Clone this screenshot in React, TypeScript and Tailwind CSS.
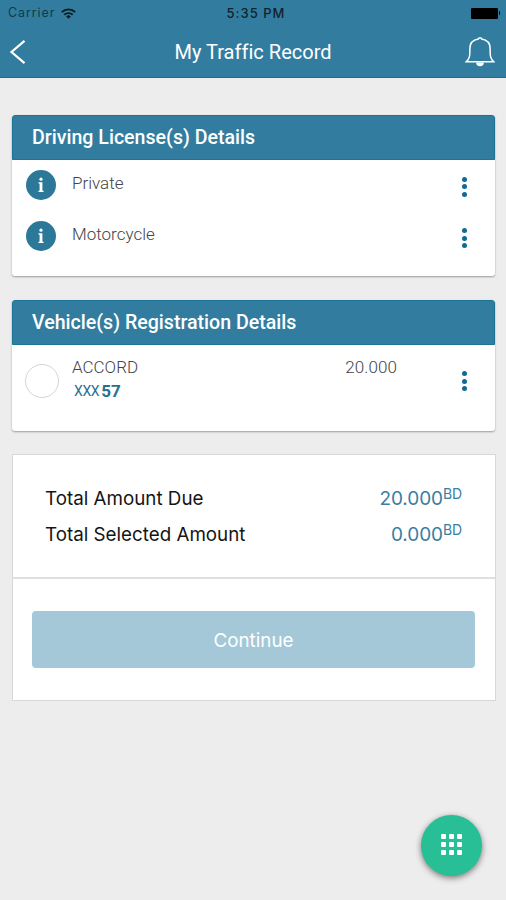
import React from "react";

const roboto = "font-['Roboto','Noto_Sans',sans-serif]";
const inter = "font-['Inter','Liberation_Sans',sans-serif]";

function Dots() {
  return (
    <div className="flex w-[5px] flex-col gap-[2.5px]">
      <span className="size-[5px] rounded-full bg-[#126a92]" />
      <span className="size-[5px] rounded-full bg-[#126a92]" />
      <span className="size-[5px] rounded-full bg-[#126a92]" />
    </div>
  );
}

function InfoIcon() {
  return (
    <svg className="size-[30px] shrink-0" viewBox="0 0 30 30">
      <circle cx="15" cy="15" r="15" fill="#2b7899" />
      <circle cx="15" cy="9.2" r="1.6" fill="#fff" />
      <path d="M12.4 12.3h4v8.3l1.2.5v1h-5.2v-1l1.2-.5v-6.8l-1.2-.5z" fill="#fff" />
    </svg>
  );
}

function StatusBar() {
  return (
    <div className={`grid h-[26px] grid-cols-3 items-center pr-[6px] pl-2 text-[12px] text-[#10222b] ${inter}`}>
      <div className="flex items-center gap-[6px]">
        <span className="pt-px text-[12.5px] tracking-[0.9px] text-[#123848]">Carrier</span>
        <svg className="h-[11px] w-[15px]" viewBox="0 0 15 11" fill="none" stroke="#0b1c24" strokeWidth="1.9">
          <path d="M.8 4.2a9.4 9.4 0 0 1 13.4 0M3.3 6.8a6 6 0 0 1 8.4 0" />
          <path d="M7.5 10.8 5.2 8.5a3.2 3.2 0 0 1 4.6 0z" fill="#0b1c24" stroke="none" />
        </svg>
      </div>
      <span className="pt-0.5 pl-[4px] text-center text-[13px] font-medium tracking-[1px] whitespace-nowrap">5:35 PM</span>
      <div className="flex items-center justify-end gap-px">
        <span className="h-[11px] w-[27px] rounded-[1px] bg-black" />
        <span className="h-1 w-[1.5px] rounded-r bg-black" />
      </div>
    </div>
  );
}

function SectionHeader({ title }: { title: string }) {
  return (
    <h2 className="flex h-[45px] items-center rounded-t-[3px] border border-[#1d7596] bg-[#327d9f] pl-[19px] text-[19.6px] font-medium text-white">
      {title}
    </h2>
  );
}

function LicenseRow({ name }: { name: string }) {
  return (
    <li className="flex h-[51.5px] items-center">
      <InfoIcon />
      <span className="mt-[-3px] ml-4 flex-1 text-[17px] font-light text-[#444]">{name}</span>
      <div className="mt-1"><Dots /></div>
    </li>
  );
}

function AmountRow({ label, value }: { label: string; value: string }) {
  return (
    <div className="flex h-9 items-center justify-between">
      <span className="text-[18.8px] text-[#151515]">{label}</span>
      <span className="flex items-center text-[19px] tracking-[-0.1px] text-[#397e9f]">
        {value}
        <span className="mt-[-11px] text-[14px]">BD</span>
      </span>
    </div>
  );
}

export default function App() {
  return (
    <div className={`relative h-[900px] w-[506px] overflow-hidden bg-[#ededed] ${roboto}`}>
      <header className="h-[78px] border-b border-[#16708f] bg-[#327d9f]">
        <StatusBar />
        <div className="grid h-[52px] grid-cols-[60px_1fr_60px] items-center">
          <svg className="ml-[9px] h-[26px] w-[18px]" viewBox="0 0 18 26" fill="none" stroke="#fff" strokeWidth="2.2">
            <path d="M15.5 1.8 2.5 13l13 11.2" />
          </svg>
          <h1 className="text-center text-[20px] tracking-[0.02px] whitespace-nowrap text-white">My Traffic Record</h1>
          <svg className="ml-[19px] h-[32px] w-[30px]" viewBox="0 0 30 32" fill="none" stroke="#fff" strokeWidth="1.5">
            <path d="M13.3 3a1.8 1.8 0 0 1 3.4 0c5.6.9 8.4 4.4 8.4 9.5 0 7.7.2 10.2 3.7 13.2H1.2c3.5-3 3.7-5.5 3.7-13.2 0-5.1 2.8-8.6 8.4-9.5z" />
            <path d="M11.2 26.5h7.6a3.8 3.8 0 0 1-7.6 0z" fill="#fff" stroke="none" />
          </svg>
        </div>
      </header>

      <main className="flex flex-col px-3 pt-[37px]">
        <section className="h-[161px] w-[483px] rounded-[3px] bg-white shadow-[0_1px_2px_rgba(0,0,0,0.35)]">
          <SectionHeader title="Driving License(s) Details" />
          <ul className="-mt-px pr-[28px] pl-[14px]">
            <LicenseRow name="Private" />
            <LicenseRow name="Motorcycle" />
          </ul>
        </section>

        <section className="mt-6 h-[131px] w-[483px] rounded-[3px] bg-white shadow-[0_1px_2px_rgba(0,0,0,0.35)]">
          <SectionHeader title="Vehicle(s) Registration Details" />
          <div className="-mt-px flex h-[74px] items-center pr-[28px] pl-[13px]">
            <span className="size-[34px] rounded-full border border-[#d5d5d5]" />
            <div className="mt-[-4px] ml-[13px] flex flex-1 flex-col">
              <div className="flex justify-between pr-[65px] text-[17px] leading-6 font-light text-[#444]">
                <span>ACCORD</span>
                <span className="tracking-[0.1px]">20.000</span>
              </div>
              <div className="ml-0.5 flex items-center gap-[2px] leading-6 text-[#286f93]">
                <span className="text-[14px] tracking-[-0.4px]">XXX</span>
                <strong className="text-[17px] font-bold">57</strong>
              </div>
            </div>
            <Dots />
          </div>
        </section>

        <section className={`mt-[23px] h-[247px] w-[484px] border border-[#d8d8d8] bg-white ${inter}`}>
          <div className="h-[124px] border-b-2 border-[#dfdfdf] pt-[26px] pr-[33px] pl-8">
            <AmountRow label="Total Amount Due" value="20.000" />
            <AmountRow label="Total Selected Amount" value="0.000" />
          </div>
          <button className="mt-8 ml-[19px] h-[57px] w-[443px] rounded-[4px] bg-[#a4c8d8] pt-[3px] text-[18.8px] text-white">
            Continue
          </button>
        </section>
      </main>

      <button
        aria-label="Menu"
        className="absolute top-[815px] left-[421px] flex size-[61px] items-center justify-center rounded-full bg-[#29bf96] shadow-[0_2px_6px_rgba(0,0,0,0.5)]"
      >
        <span className="mt-[-2px] grid grid-cols-3 gap-[3px]">
          {Array.from({ length: 9 }, (_, i) => (
            <span key={i} className="size-[5px] rounded-[1px] bg-white" />
          ))}
        </span>
      </button>
    </div>
  );
}
